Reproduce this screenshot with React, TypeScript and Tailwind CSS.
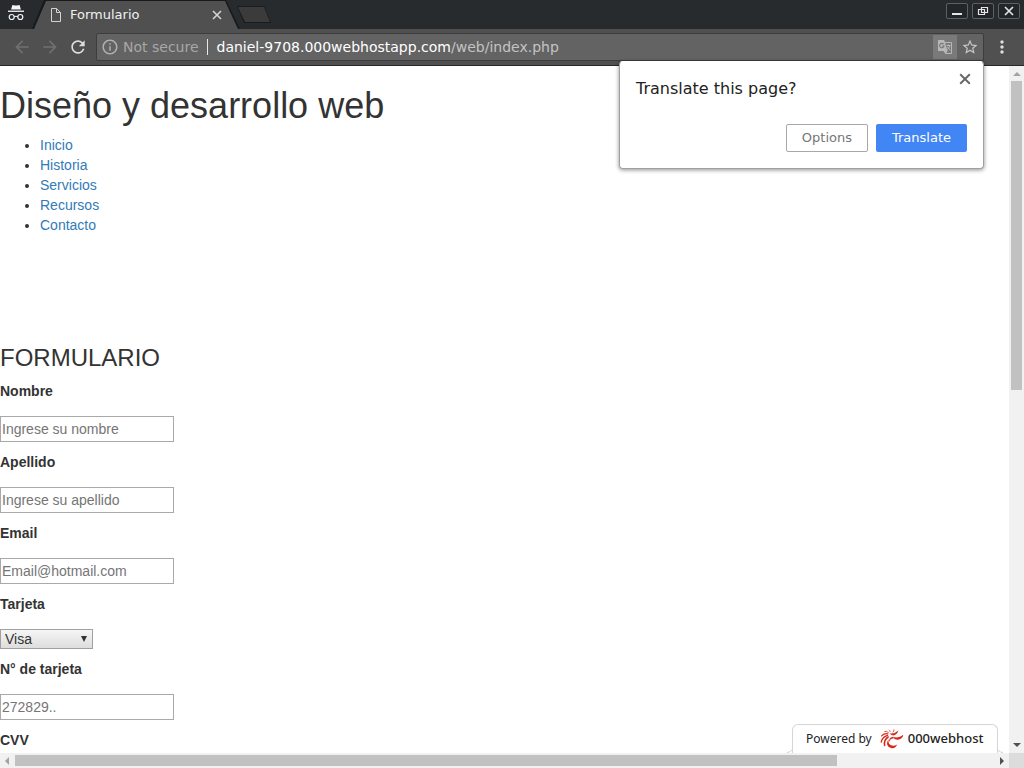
import { useId } from "react";
import type { ReactNode } from "react";
import { MdArrowBack, MdArrowForward, MdInfoOutline, MdMoreVert, MdRefresh, MdStarBorder } from "react-icons/md";

function IncognitoIcon() {
  return (
    <svg width="18" height="18" viewBox="0 0 18 18" fill="none" aria-hidden="true">
      <path d="M5.4 1 8 1.6h2l2.6-.6 1.3 4.4H4.1z" fill="#f5f5f5" />
      <path d="M1 6.6h16v1.3H1z" fill="#f5f5f5" />
      <circle cx="4.7" cy="13" r="2.5" stroke="#f5f5f5" strokeWidth="1.2" />
      <circle cx="13.3" cy="13" r="2.5" stroke="#f5f5f5" strokeWidth="1.2" />
      <path d="M7.2 12.8q1.8-1.2 3.6 0" stroke="#f5f5f5" strokeWidth="1.1" />
    </svg>
  );
}

function PageIcon() {
  return (
    <svg width="12" height="14" viewBox="0 0 12 14" fill="none" stroke="#d2d2d2" aria-hidden="true">
      <path d="M1.5.5h5l4 4v9h-9zM6.5.5v4h4" />
    </svg>
  );
}

function CrossIcon({ size, color, weight }: { size: number; color: string; weight: number }) {
  return (
    <svg width={size} height={size} viewBox="0 0 10 10" fill="none" stroke={color} strokeWidth={weight} aria-hidden="true">
      <path d="m1 1 8 8M9 1 1 9" />
    </svg>
  );
}

function TranslateIcon() {
  return (
    <svg width="16" height="16" viewBox="0 0 16 16" fill="none" aria-hidden="true">
      <path d="M8 3.5h6.5v11H8.5" stroke="#b8b8b8" />
      <path d="M1.5 1h5.7l3.4 11H1.5Q1 12 1 11.500V1.500Q1 1 1.500 1z" fill="#b8b8b8" />
      <path d="M6.500 12h4l-2 3z" fill="#b8b8b8" />
      <path d="M6.600 5.200A2.200 2.200 0 1 0 7 7H5" stroke="#777777" strokeWidth="1.100" />
      <path d="M9.600 6.500h4M11.500 5.500v1M12.800 6.500q-.6 2.500-2.200 4M10.500 8l2.800 3.200" stroke="#b8b8b8" />
    </svg>
  );
}

function HostLogo() {
  return (
    <svg width="24" height="20" viewBox="0 0 24 20" fill="#d8281c" aria-hidden="true">
      <path d="M9.6 4.2Q14.600 5.200 18.400 1.600 17.500 5.800 13.400 6.400 10.600 6.300 9.600 4.200z" />
      <path d="M13 7.800Q18.500 9.600 23.400 5.800 22.500 10.200 17.600 10.800 14 10.600 13 7.800z" />
      <path d="M8.600 10.200Q7.800 15.600 11.800 16.600 14.600 17.200 17 15.400 15.800 19.400 11.800 19.200 7.400 18.600 7 14.600 7 12 8.600 10.200z" />
      <path d="M13.600 9.400Q9.400 9.600 9.600 13.400 7.800 9 13 7.800z" />
      <g fill="none" stroke="#d8281c" strokeLinecap="round">
        <path d="M8.200 8Q3.600 10.800 4.600 16.400" strokeWidth="1.500" />
        <path d="M7.600 6.400Q2.400 8 1.200 13" strokeWidth="1.300" />
        <path d="M7.800 4.800Q4.200 4.200 1.600 6.800" strokeWidth="1.200" />
        <path d="M8.400 3.400Q6.800 2 4.800 2.400" opacity=".8" />
        <path d="M13 3.200Q14 2.400 14 .8" opacity=".8" />
        <path d="M10.200 2.600Q10 1.600 9.200 1" opacity=".7" />
      </g>
    </svg>
  );
}

function WindowButton({ label, children }: { label: string; children: ReactNode }) {
  return (
    <button aria-label={label} className="flex h-4 w-[22px] items-center justify-center rounded-xs border border-[#5d6164] bg-[#222628]">
      <svg width="14" height="12" viewBox="0 0 14 12" fill="none" stroke="#e4e4e4" aria-hidden="true">
        {children}
      </svg>
    </button>
  );
}

function TitleBar() {
  return (
    <header className="flex h-[29px] shrink-0 items-stretch bg-[#272b2e]">
      <div className="flex w-8 items-center justify-center pb-1">
        <IncognitoIcon />
      </div>
      <div className="bg-[#17191b] [clip-path:polygon(0_100%,12px_0,194px_0,100%_100%)]">
        <div className="mt-px flex h-7 w-[208px] items-center bg-[#505050] pr-[18px] pl-[18px] [clip-path:polygon(2px_100%,14px_0,193px_0,206px_100%)]">
          <PageIcon />
          <span className="ml-2 flex-1 text-[13px] text-[#f0f0f0]">Formulario</span>
          <button aria-label="Close tab">
            <CrossIcon size={10} color="#d5d5d5" weight={1.6} />
          </button>
        </div>
      </div>
      <button aria-label="New tab" className="ml-[-3px] self-center bg-[#191b1c] [clip-path:polygon(0_0,27px_0,100%_100%,7px_100%)]">
        <span className="m-px block h-[15px] w-8 bg-[#3b3b3b] [clip-path:polygon(0_0,26px_0,100%_100%,7px_100%)]" />
      </button>
      <div className="ml-auto flex gap-1 pt-[3px] pr-1">
        <WindowButton label="Minimize">
          <path d="M2 9h10" strokeWidth="2" />
        </WindowButton>
        <WindowButton label="Restore">
          <path d="M5.500 2.500h6v5h-6zM2.500 4.500h6v5h-6z" strokeWidth="1.200" />
        </WindowButton>
        <WindowButton label="Close">
          <path d="m3 2 8 8M11 2l-8 8" strokeWidth="1.700" />
        </WindowButton>
      </div>
    </header>
  );
}

function Toolbar() {
  return (
    <nav className="relative z-10 flex h-[37px] shrink-0 items-center border-b border-[#282828] bg-[#505050] pr-3">
      <button aria-label="Back" className="ml-3 text-[#707070]">
        <MdArrowBack size={20} />
      </button>
      <button aria-label="Forward" className="ml-2 text-[#707070]">
        <MdArrowForward size={20} />
      </button>
      <button aria-label="Reload" className="ml-2 text-[#dedede]">
        <MdRefresh size={20} />
      </button>
      <div className="relative ml-2 flex h-7 flex-1 items-center rounded-xs border border-[#3d3d3d] bg-[#636363] pr-1 pl-1">
        <MdInfoOutline size={18} className="text-[#b0b0b0]" />
        <span className="ml-1 text-sm text-[#a8a8a8]">Not secure</span>
        <span className="mr-[9px] ml-2 h-4 w-px bg-[#e8e8e8]" />
        <span className="flex-1 text-sm text-[#c4c4c4]">
          <span className="text-white">daniel-9708.000webhostapp.com</span>/web/index.php
        </span>
        <button aria-label="Translate this page" className="flex h-6 w-6 items-center justify-center bg-[#7a7a7a]">
          <TranslateIcon />
        </button>
        <button aria-label="Bookmark this page" className="ml-1 text-[#c6c6c6]">
          <MdStarBorder size={18} />
        </button>
        <TranslateBubble />
      </div>
      <button aria-label="Menu" className="ml-2 text-[#dddddd]">
        <MdMoreVert size={20} />
      </button>
    </nav>
  );
}

function TranslateBubble() {
  return (
    <section
      role="dialog"
      aria-label="Translate"
      className="absolute top-[27px] right-[-1px] w-[365px] rounded-sm border border-[#a0a0a0] border-t-white bg-white px-4 pt-[15px] pb-4 shadow-[0_1px_4px_rgba(0,0,0,0.45)]"
    >
      <div className="flex items-start justify-between">
        <h2 className="text-base text-[#222222]">Translate this page?</h2>
        <button aria-label="Dismiss" className="-mt-2 -mr-2 flex h-5 w-5 items-center justify-center">
          <CrossIcon size={12} color="#666666" weight={1.6} />
        </button>
      </div>
      <div className="mt-[23px] flex justify-end gap-2 text-[13px]">
        <button className="h-7 rounded-xs border border-[#a8a8a8] px-[15px] text-[#757575]">Options</button>
        <button className="h-7 rounded-xs bg-[#4285f4] px-4 text-white">Translate</button>
      </div>
    </section>
  );
}

function TextField({ label, placeholder }: { label: string; placeholder: string }) {
  const id = useId();
  return (
    <div className="flex flex-col items-start gap-[15px]">
      <label htmlFor={id} className="font-bold">
        {label}
      </label>
      <input id={id} placeholder={placeholder} className="h-[26px] w-[174px] border border-[#a9a9a9] bg-white px-px placeholder:text-[#757575]" />
    </div>
  );
}

function CardSelect() {
  const id = useId();
  return (
    <div className="flex flex-col items-start gap-[15px]">
      <label htmlFor={id} className="font-bold">
        Tarjeta
      </label>
      <div className="relative">
        <select
          id={id}
          className="block h-5 w-[93px] appearance-none rounded-none border border-[#a0a0a0] bg-linear-to-b from-[#f6f6f6] to-[#dddddd] px-1 text-sm/[18px]"
        >
          <option>Visa</option>
          <option>Mastercard</option>
        </select>
        <svg className="pointer-events-none absolute top-[7px] right-[6px]" width="6" height="6" viewBox="0 0 6 6" fill="#333333" aria-hidden="true">
          <path d="M0 0h6L3 6z" />
        </svg>
      </div>
    </div>
  );
}

const links = ["Inicio", "Historia", "Servicios", "Recursos", "Contacto"];

function Page() {
  return (
    <main className="relative min-w-0 flex-1 overflow-hidden bg-white font-['Liberation_Sans',Arial,sans-serif] text-sm text-[#333333]">
      <h1 className="mt-5 text-4xl">Diseño y desarrollo web</h1>
      <ul className="mt-[9px] list-disc pl-10">
        {links.map((link) => (
          <li key={link}>
            <a href="#" className="text-[#337ab7]">
              {link}
            </a>
          </li>
        ))}
      </ul>
      <form className="mt-[110px] flex flex-col gap-[10px]">
        <h3 className="text-2xl/[26px]">FORMULARIO</h3>
        <TextField label="Nombre" placeholder="Ingrese su nombre" />
        <TextField label="Apellido" placeholder="Ingrese su apellido" />
        <TextField label="Email" placeholder="Email@hotmail.com" />
        <CardSelect />
        <TextField label="N° de tarjeta" placeholder="272829.." />
        <TextField label="CVV" placeholder="123" />
      </form>
      <a
        href="#"
        className="absolute right-[11px] bottom-0 flex h-[29px] w-[206px] items-center rounded-t-md border border-b-0 border-[#d5d5d5] bg-white pl-[13px] font-['Noto_Sans',sans-serif] text-xs text-[#222222]"
      >
        <span>Powered by</span>
        <span className="ml-2">
          <HostLogo />
        </span>
        <span className="ml-1 text-[13px] font-medium">000webhost</span>
        <svg className="absolute -left-[6px] bottom-0" width="6" height="6" viewBox="0 0 6 6" fill="none" stroke="#d5d5d5" aria-hidden="true">
          <path d="M6 0Q5.500 5 0 5.500" />
        </svg>
        <svg className="absolute -right-[6px] bottom-0" width="6" height="6" viewBox="0 0 6 6" fill="none" stroke="#d5d5d5" aria-hidden="true">
          <path d="M0 0Q.5 5 6 5.500" />
        </svg>
      </a>
    </main>
  );
}

function ScrollArrow({ points, color }: { points: string; color: string }) {
  return (
    <svg className="shrink-0" width="15" height="15" viewBox="0 0 15 15" fill={color} aria-hidden="true">
      <polygon points={points} />
    </svg>
  );
}

export default function App() {
  return (
    <div className="flex h-screen flex-col overflow-hidden font-['DejaVu_Sans',sans-serif]">
      <TitleBar />
      <Toolbar />
      <div className="flex min-h-0 flex-1">
        <Page />
        <div className="flex w-[15px] flex-col items-center bg-[#f1f1f1]">
          <ScrollArrow points="4,10 8,6 12,10" color="#a3a3a3" />
          <div className="min-h-0 w-[11px] flex-1">
            <div className="h-[47%] bg-[#c1c1c1]" />
          </div>
          <ScrollArrow points="4,5 12,5 8,9" color="#505050" />
        </div>
      </div>
      <div className="flex h-[15px] shrink-0 items-center bg-[#f1f1f1]">
        <ScrollArrow points="9,4 9,12 5,8" color="#a3a3a3" />
        <div className="h-[11px] flex-1">
          <div className="h-full w-[84%] bg-[#c1c1c1]" />
        </div>
        <ScrollArrow points="6,4 6,12 10,8" color="#505050" />
        <div className="h-full w-[15px] bg-[#dcdcdc]" />
      </div>
    </div>
  );
}
